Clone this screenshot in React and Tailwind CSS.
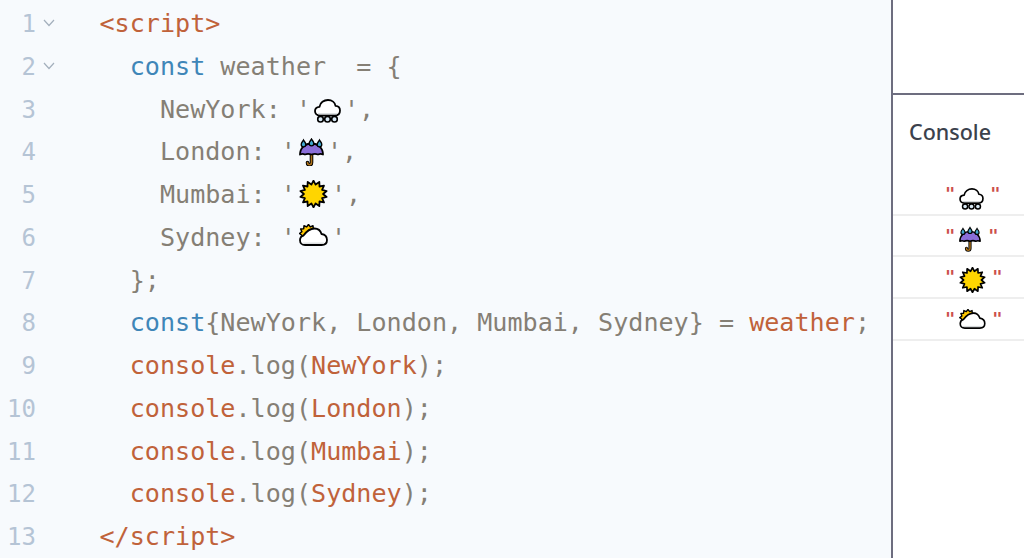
const mono = "font-['DejaVu_Sans_Mono','Liberation_Mono',monospace]";

const O = ({ children }) => <span className="text-[#c0623a]">{children}</span>;
const B = ({ children }) => <span className="text-[#3f86b8]">{children}</span>;

// spiky ring used by the sun and the sun behind the cloud
const star = (cx, cy, outer, inner, spikes) => {
  const pts = [];
  for (let i = 0; i < spikes * 2; i++) {
    const r = i % 2 === 0 ? outer : inner;
    const a = (Math.PI * i) / spikes - Math.PI / 2;
    pts.push(`${(cx + r * Math.cos(a)).toFixed(1)},${(cy + r * Math.sin(a)).toFixed(1)}`);
  }
  return pts.join(' ');
};

const SnowCloud = ({ className }) => (
  <svg viewBox="0 0 27 24" className={className}>
    <path d="M6 16.500C2.500 16.500 1 14.500 1 12c0-2.500 2-4 4.500-4.200C6 3.500 10 1 14 1c4 0 7 2.500 7.500 5.800 3 .2 4.500 2.200 4.500 4.700 0 3-2 5-5 5z" fill="#fff" stroke="#000" strokeWidth="1.800" strokeLinejoin="round" />
    <path d="M4 14.800h19" stroke="#d3d7da" strokeWidth="1.200" />
    <circle cx="6.500" cy="20.200" r="2.800" fill="#d8e9f5" stroke="#000" strokeWidth="1.600" />
    <circle cx="13.500" cy="20.200" r="2.800" fill="#d8e9f5" stroke="#000" strokeWidth="1.600" />
    <circle cx="20.500" cy="20.200" r="2.800" fill="#d8e9f5" stroke="#000" strokeWidth="1.600" />
  </svg>
);

const Umbrella = ({ className }) => (
  <svg viewBox="0 0 25 28" className={className}>
    <path d="M12.500 13v11.500c0 3-4 3-4 0" fill="none" stroke="#000" strokeWidth="3.600" strokeLinecap="round" />
    <path d="M12.500 13v11.500c0 3-4 3-4 0" fill="none" stroke="#b0741a" strokeWidth="1.600" strokeLinecap="round" />
    <path d="M1 16.500C1 10 6 5.500 12.500 5.500S24 10 24 16.500c-1.500-.7-3.500-.7-5 0-1.700-.7-4.500-.7-6.500 0-2-.7-4.800-.7-6.500 0-1.500-.7-3.500-.7-5 0z" fill="#8a6ed8" stroke="#000" strokeWidth="1.800" strokeLinejoin="round" />
    <path d="M4.500 2C3.700 3.600 2.200 4.600 2.200 6.500a2.300 2.300 0 0 0 4.600 0C6.800 4.600 5.300 3.600 4.500 2z" fill="#3fa9cf" stroke="#000" strokeWidth="1.300" />
    <path d="M12.500 1c-.8 1.600-2.300 2.600-2.300 4.500a2.300 2.300 0 0 0 4.600 0c0-1.900-1.500-2.900-2.300-4.500z" fill="#3fa9cf" stroke="#000" strokeWidth="1.300" />
    <path d="M20.500 2c-.8 1.600-2.300 2.600-2.300 4.500a2.300 2.300 0 0 0 4.600 0c0-1.900-1.500-2.900-2.300-4.500z" fill="#3fa9cf" stroke="#000" strokeWidth="1.300" />
  </svg>
);

const Sun = ({ className }) => (
  <svg viewBox="0 0 29 28" className={className}>
    <polygon points={star(14.5, 14, 13.4, 9.6, 14)} fill="#ffd500" stroke="#000" strokeWidth="1.800" strokeLinejoin="round" />
  </svg>
);

const SunCloud = ({ className }) => (
  <svg viewBox="0 0 29 22" className={className}>
    <polygon points={star(9.5, 9.500, 9, 6.800, 12)} fill="#ffc800" stroke="#000" strokeWidth="1.500" strokeLinejoin="round" />
    <path d="M6 21c-3 0-5-2-5-4.800 0-2.400 1.500-4 3.500-4.600C7 8 11 4.500 15.500 4.500c3.500 0 6 2 7 5.500C26 10.500 28 13 28 16c0 3-2.200 5-5.500 5z" fill="#fff" stroke="#000" strokeWidth="1.800" strokeLinejoin="round" />
    <path d="M4 19.200h21" stroke="#d5d8da" strokeWidth="1.200" />
  </svg>
);

const lines = [
  { fold: true, code: <O>{'<script>'}</O> },
  { fold: true, code: <>{'  '}<B>const</B> weather  = {'{'}</> },
  { code: <>{'    '}NewYork: '<SnowCloud className="inline-block w-[27px] h-[24px] mx-[3px] align-[-5px]" />',</> },
  { code: <>{'    '}London: '<Umbrella className="inline-block w-[25px] h-[28px] mx-[3px] align-[-6px]" />',</> },
  { code: <>{'    '}Mumbai: '<Sun className="inline-block w-[29px] h-[28px] mx-[3px] align-[-5px]" />',</> },
  { code: <>{'    '}Sydney: '<SunCloud className="inline-block w-[29px] h-[22px] mx-[3px] align-[0px]" />'</> },
  { code: <>{'  '}{'};'}</> },
  { code: <>{'  '}<B>const</B>{'{NewYork, London, Mumbai, Sydney} = '}<O>weather</O>;</> },
  { code: <>{'  '}<O>console</O>.log(<O>NewYork</O>);</> },
  { code: <>{'  '}<O>console</O>.log(<O>London</O>);</> },
  { code: <>{'  '}<O>console</O>.log(<O>Mumbai</O>);</> },
  { code: <>{'  '}<O>console</O>.log(<O>Sydney</O>);</> },
  { code: <O>{'</script>'}</O> },
];

const logs = [
  <SnowCloud className="inline-block w-[25px] h-[22px] ml-[4px] mr-[6px] align-[-10px]" />,
  <Umbrella className="inline-block w-[22px] h-[26px] ml-[4px] mr-[7px] align-[-10px]" />,
  <Sun className="inline-block w-[27px] h-[26px] ml-[4px] mr-[6px] align-[-10px]" />,
  <SunCloud className="inline-block w-[27px] h-[20px] ml-[4px] mr-[6px] align-[-4px]" />,
];

const App = () => {
  return (
    <div className="w-[1024px] h-[558px] flex overflow-hidden bg-white">
      <div className={`w-[891px] shrink-0 bg-[#f7fafd] pt-[3px] text-[25.1px] leading-[42.77px] text-[#857f75] ${mono}`}>
        {lines.map((line, i) => (
          <div key={i} className="flex h-[42.77px]">
            <div className="w-[36px] shrink-0 text-right text-[#b5c4d5] text-[24px]">{i + 1}</div>
            <div className="w-[63.5px] shrink-0 pl-[7px] pt-[16px]">
              {line.fold && (
                <svg viewBox="0 0 12 8" className="w-[12px] h-[8px]" fill="none" stroke="#a3afbc" strokeWidth="1.200">
                  <path d="M1 1l5 5.500L11 1" />
                </svg>
              )}
            </div>
            <div className="whitespace-pre">{line.code}</div>
          </div>
        ))}
      </div>
      <div className="flex-1 flex flex-col border-l-2 border-[#6d6d7f]">
        <div className="h-[95px] shrink-0 border-b-2 border-[#6d6d7f]"></div>
        <div className="h-[79px] shrink-0 pl-[16px] pt-[22px] text-[21.5px] leading-[30px] font-medium text-[#3b414c] font-['Noto_Sans',sans-serif]">
          Console
        </div>
        {logs.map((icon, i) => (
          <div key={i} className={`h-[41.7px] pl-[52px] pt-[2px] border-b-2 border-[#eeeeee] whitespace-nowrap text-[#cc4f4b] text-[17px] leading-[37.7px] font-bold ${mono}`}>
            "{icon}"
          </div>
        ))}
      </div>
    </div>
  );
};

export default App;
